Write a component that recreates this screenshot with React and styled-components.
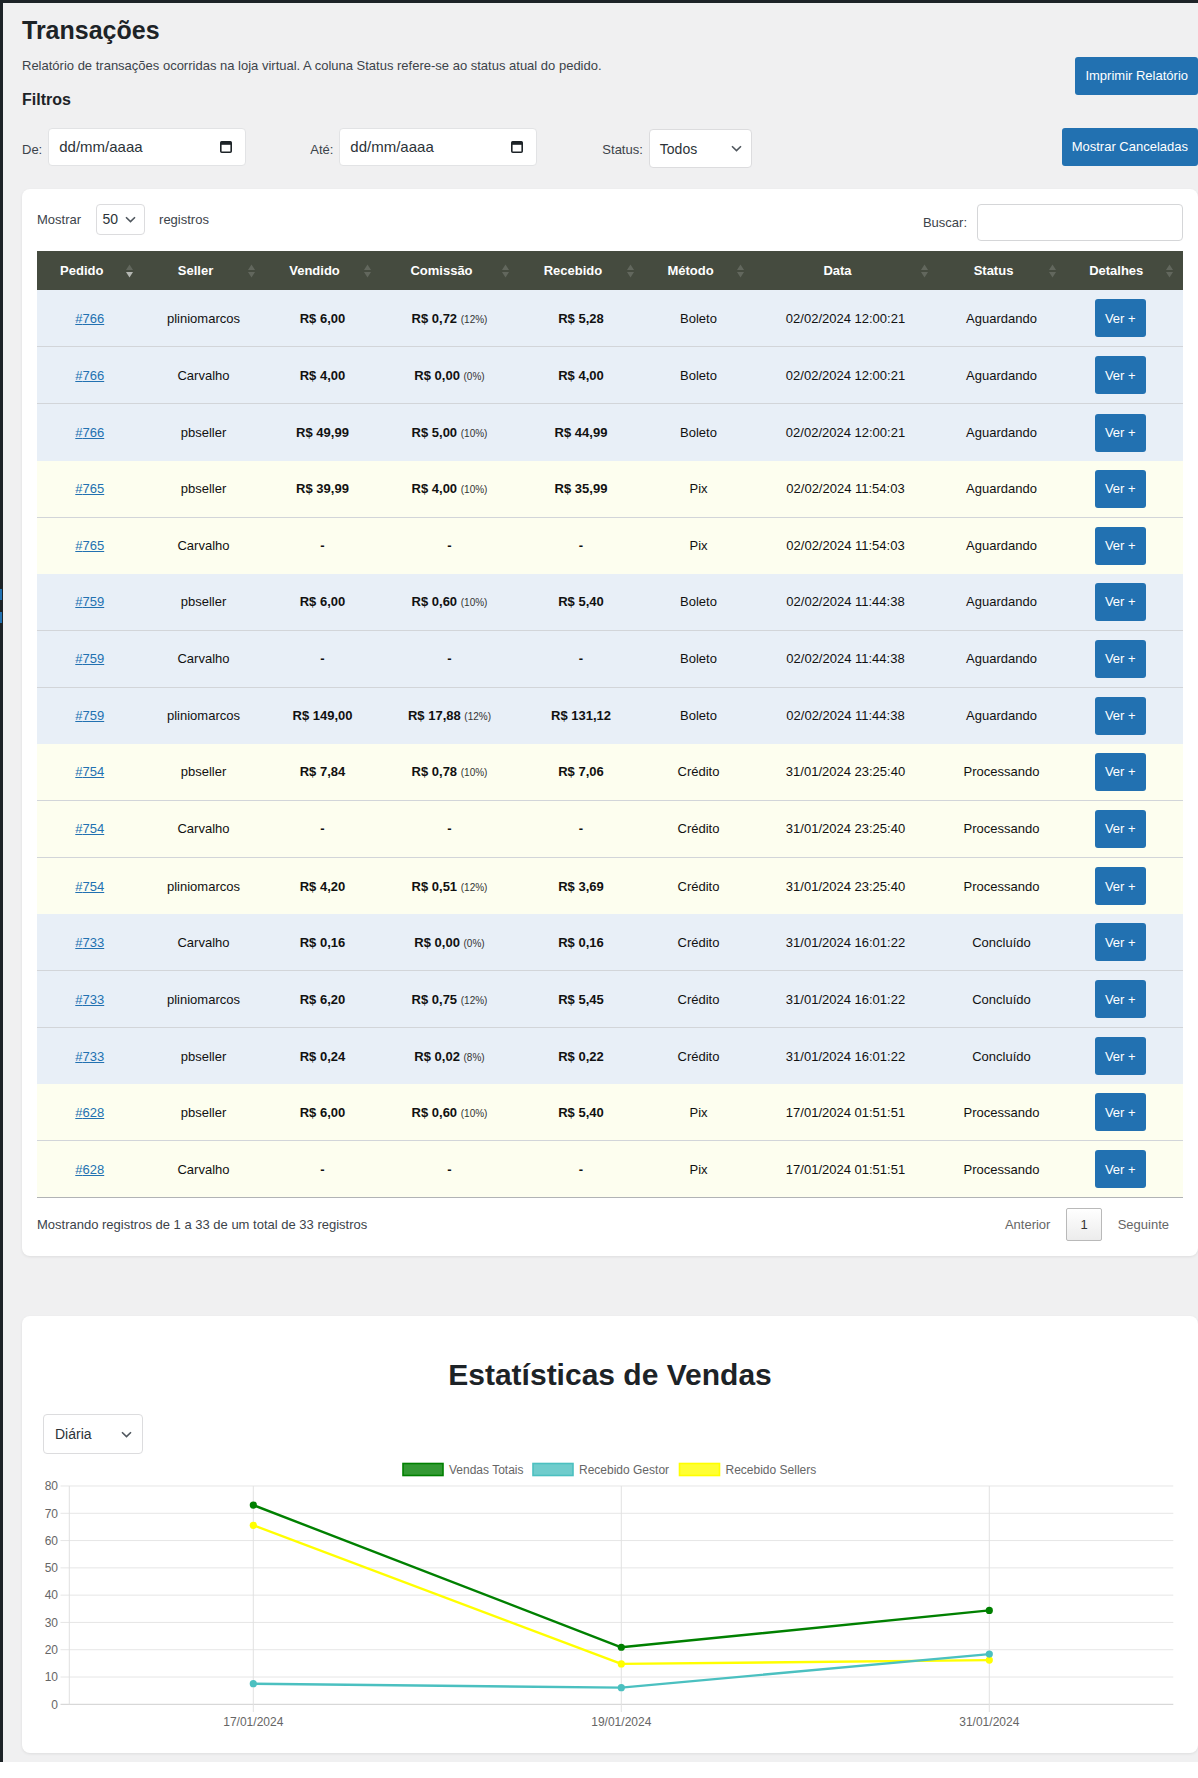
import React from 'react';
import styled, { createGlobalStyle } from 'styled-components';

const GlobalStyle = createGlobalStyle`
  html, body {
    margin: 0;
    padding: 0;
    background: #fff;
    overflow: hidden;
  }
  body {
    font-family: "Liberation Sans", Arial, sans-serif;
    font-size: 13px;
    color: #3c434a;
  }
  * { box-sizing: border-box; }
`;

const Screen = styled.div`
  display: flex;
  background: #f0f0f1;
  border-top: 3px solid #1d2327;
`;

const AdminEdge = styled.div`
  width: 3px;
  flex: none;
  background: #1d2327;
  padding-top: 586px;
  display: flex;
  flex-direction: column;
  gap: 12px;
`;

const EdgeMark = styled.span`
  display: block;
  width: 2px;
  height: 11px;
  background: #2271b1;
`;

const Main = styled.main`
  flex: 1;
  min-width: 0;
  padding: 0 0 8.7px 19px;
`;

const PageTitle = styled.h1`
  margin: 11.7px 0 0;
  font-size: 25px;
  line-height: 30px;
  font-weight: 700;
  color: #1d2327;
`;

const IntroRow = styled.div`
  display: flex;
  justify-content: space-between;
  align-items: flex-start;
  margin-top: 12.3px;
`;

const IntroText = styled.p`
  margin: 0;
  font-size: 13px;
  line-height: 18.2px;
  color: #3c434a;
`;

const SectionTitle = styled.h3`
  margin: 14.9px 0 0;
  font-size: 16px;
  line-height: 20.8px;
  font-weight: 700;
  color: #1d2327;
`;

const PrimaryButton = styled.button`
  height: 38px;
  padding: 0 10px;
  border: 0;
  border-radius: 3px;
  background: #2271b1;
  color: #fff;
  font-family: inherit;
  font-size: 13px;
  white-space: nowrap;
  margin-left: ${(p) => (p.$push ? 'auto' : '0')};
`;

const FilterRow = styled.div`
  display: flex;
  align-items: flex-start;
  margin-top: 16.8px;
`;

const FieldLabel = styled.label`
  align-self: center;
  font-size: 13px;
  color: #3c434a;
  margin: 3px 6px 0 ${(p) => p.$gap || 0}px;
`;

const DateField = styled.div`
  width: 198px;
  height: 38px;
  display: flex;
  align-items: center;
  justify-content: space-between;
  padding: 0 13px 0 10px;
  background: #fff;
  border: 1px solid #e2e3e5;
  border-radius: 4px;
  font-size: 15px;
  color: #2c3338;
`;

const SelectBox = styled.div`
  width: ${(p) => p.$w}px;
  height: ${(p) => p.$h}px;
  margin-top: ${(p) => p.$mt || 0}px;
  display: flex;
  align-items: center;
  justify-content: space-between;
  padding: 0 ${(p) => p.$pr || 9}px 0 ${(p) => p.$pl || 10}px;
  background: #fff;
  border: 1px solid #dcdcde;
  border-radius: 4px;
  font-size: 14px;
  color: #2c3338;
`;

const Card = styled.section`
  background: #fff;
  border-radius: 8px;
  box-shadow: 0 1px 3px rgba(0, 0, 0, 0.08);
  margin-top: ${(p) => p.$mt}px;
  padding: ${(p) => p.$pad};
`;

const TableTop = styled.div`
  display: flex;
  justify-content: space-between;
  align-items: flex-start;
`;

const ControlGroup = styled.div`
  display: flex;
  align-items: center;
  gap: ${(p) => p.$gap}px;
  font-size: 13px;
  color: #3c434a;
`;

const SearchInput = styled.div`
  width: 206px;
  height: 37px;
  border: 1px solid #d5d6d8;
  border-radius: 4px;
  background: #fff;
`;

const DataTable = styled.table`
  width: 100%;
  margin-top: 10.4px;
  border-collapse: collapse;
  table-layout: fixed;
  border-bottom: 1px solid #b1b3b5;
`;

const HeadCell = styled.th`
  background: #454b3f;
  color: #fff;
  font-size: 13px;
  font-weight: 700;
  padding: 10px;
  line-height: 19px;
`;

const HeadInner = styled.div`
  display: flex;
  align-items: center;
`;

const HeadLabel = styled.span`
  flex: 1;
  text-align: center;
  white-space: nowrap;
`;

const SortWrap = styled.span`
  flex: none;
  display: flex;
  margin-left: 9px;
`;

const BodyRow = styled.tr`
  background: ${(p) => (p.$tone === 'blue' ? '#e8eff7' : '#fdfeef')};
  & + & > td {
    border-top: 1px solid #d2d5d9;
  }
`;

const Cell = styled.td`
  padding: 9.04px ${(p) => (p.$action ? '14px' : '10px')} 9.04px ${(p) => (p.$action ? '6px' : '10px')};
  text-align: center;
  font-size: 13px;
  color: #111;
  white-space: nowrap;
  font-weight: ${(p) => (p.$strong ? 700 : 400)};
`;

const OrderLink = styled.a`
  color: #2271b1;
  text-decoration: underline;
`;

const Rate = styled.span`
  font-size: 10px;
  font-weight: 400;
  color: #333;
`;

const ViewButton = styled.button`
  width: 51px;
  height: 38px;
  border: 0;
  border-radius: 3px;
  background: #2271b1;
  color: #fff;
  font-family: inherit;
  font-size: 13px;
  vertical-align: middle;
`;

const TableFooter = styled.div`
  display: flex;
  justify-content: space-between;
  align-items: center;
  margin-top: 10px;
  font-size: 13px;
  color: #3c434a;
`;

const Pagination = styled.div`
  display: flex;
  align-items: center;
  gap: 2px;
`;

const PageLink = styled.span`
  padding: 6.7px 13px;
  border: 1px solid ${(p) => (p.$current ? '#b9b9b9' : 'transparent')};
  border-radius: 2px;
  background: ${(p) => (p.$current ? 'linear-gradient(to bottom, #fff 0%, #ececec 100%)' : 'transparent')};
  color: ${(p) => (p.$current ? '#333' : '#666')};
  line-height: 17px;
  font-size: 13px;
`;

const ChartTitle = styled.h2`
  margin: 21.3px 0 0;
  text-align: center;
  font-size: 30px;
  line-height: 36px;
  font-weight: 700;
  color: #1d2327;
`;

const ChartBlock = styled.div`
  margin-top: 21.3px;
`;

const ChartSvg = styled.svg`
  display: block;
  margin-top: 2.3px;
  font-family: "Liberation Sans", Arial, sans-serif;
`;

const Chevron = () => (
  <svg width="11" height="7" viewBox="0 0 11 7">
    <path d="M1 1.2 5.5 5.6 10 1.2" fill="none" stroke="#50575e" strokeWidth="1.6" />
  </svg>
);

const CalendarIcon = () => (
  <svg width="12" height="13" viewBox="0 0 12 13">
    <rect x="0.8" y="1.8" width="10.4" height="10.4" rx="1" fill="none" stroke="#1d2327" strokeWidth="1.6" />
    <rect x="0.8" y="1.6" width="10.4" height="3.2" fill="#1d2327" />
  </svg>
);

const SortIcon = ({ active }) => (
  <svg width="7" height="14" viewBox="0 0 7 14">
    <path d="M0 6 3.5 0.5 7 6Z" fill="#fff" fillOpacity="0.16" />
    <path d="M0 8 7 8 3.5 13.5Z" fill="#fff" fillOpacity={active ? 0.6 : 0.16} />
  </svg>
);

const columns = [
  { label: 'Pedido', width: 105.5, active: true },
  { label: 'Seller', width: 122 },
  { label: 'Vendido', width: 116 },
  { label: 'Comissão', width: 138 },
  { label: 'Recebido', width: 125 },
  { label: 'Método', width: 110 },
  { label: 'Data', width: 184 },
  { label: 'Status', width: 128 },
  { label: 'Detalhes', width: 117.5 },
];

const rows = [
  ['766', 'pliniomarcos', 'R$ 6,00', 'R$ 0,72', '12%', 'R$ 5,28', 'Boleto', '02/02/2024 12:00:21', 'Aguardando'],
  ['766', 'Carvalho', 'R$ 4,00', 'R$ 0,00', '0%', 'R$ 4,00', 'Boleto', '02/02/2024 12:00:21', 'Aguardando'],
  ['766', 'pbseller', 'R$ 49,99', 'R$ 5,00', '10%', 'R$ 44,99', 'Boleto', '02/02/2024 12:00:21', 'Aguardando'],
  ['765', 'pbseller', 'R$ 39,99', 'R$ 4,00', '10%', 'R$ 35,99', 'Pix', '02/02/2024 11:54:03', 'Aguardando'],
  ['765', 'Carvalho', null, null, null, null, 'Pix', '02/02/2024 11:54:03', 'Aguardando'],
  ['759', 'pbseller', 'R$ 6,00', 'R$ 0,60', '10%', 'R$ 5,40', 'Boleto', '02/02/2024 11:44:38', 'Aguardando'],
  ['759', 'Carvalho', null, null, null, null, 'Boleto', '02/02/2024 11:44:38', 'Aguardando'],
  ['759', 'pliniomarcos', 'R$ 149,00', 'R$ 17,88', '12%', 'R$ 131,12', 'Boleto', '02/02/2024 11:44:38', 'Aguardando'],
  ['754', 'pbseller', 'R$ 7,84', 'R$ 0,78', '10%', 'R$ 7,06', 'Crédito', '31/01/2024 23:25:40', 'Processando'],
  ['754', 'Carvalho', null, null, null, null, 'Crédito', '31/01/2024 23:25:40', 'Processando'],
  ['754', 'pliniomarcos', 'R$ 4,20', 'R$ 0,51', '12%', 'R$ 3,69', 'Crédito', '31/01/2024 23:25:40', 'Processando'],
  ['733', 'Carvalho', 'R$ 0,16', 'R$ 0,00', '0%', 'R$ 0,16', 'Crédito', '31/01/2024 16:01:22', 'Concluído'],
  ['733', 'pliniomarcos', 'R$ 6,20', 'R$ 0,75', '12%', 'R$ 5,45', 'Crédito', '31/01/2024 16:01:22', 'Concluído'],
  ['733', 'pbseller', 'R$ 0,24', 'R$ 0,02', '8%', 'R$ 0,22', 'Crédito', '31/01/2024 16:01:22', 'Concluído'],
  ['628', 'pbseller', 'R$ 6,00', 'R$ 0,60', '10%', 'R$ 5,40', 'Pix', '17/01/2024 01:51:51', 'Processando'],
  ['628', 'Carvalho', null, null, null, null, 'Pix', '17/01/2024 01:51:51', 'Processando'],
];

// alternate the row tone every time the order number changes
const toned = rows.reduce((acc, r, i) => {
  const prev = acc[i - 1];
  const tone = !prev ? 'blue' : prev.row[0] === r[0] ? prev.tone : prev.tone === 'blue' ? 'yellow' : 'blue';
  acc.push({ row: r, tone });
  return acc;
}, []);

// chart geometry (px inside the svg)
const CH_W = 1134;
const CH_H = 280;
const PLOT_L = 26.3;
const PLOT_R = 1130.3;
const ZERO_Y = 248.3;
const UNIT = 2.7288;
const yOf = (v) => ZERO_Y - v * UNIT;
const cats = [
  { label: '17/01/2024', x: 210.3 },
  { label: '19/01/2024', x: 578.3 },
  { label: '31/01/2024', x: 946.3 },
];
const series = [
  { name: 'Recebido Sellers', color: '#ffff00', data: [65.6, 14.8, 16.2] },
  { name: 'Recebido Gestor', color: '#4bc0c0', data: [7.55, 6.1, 18.4] },
  { name: 'Vendas Totais', color: '#008000', data: [73.0, 20.9, 34.4] },
];
const legend = [
  { name: 'Vendas Totais', x: 360, fill: '#339933', stroke: '#008000' },
  { name: 'Recebido Gestor', x: 490, fill: '#6fcccc', stroke: '#4bc0c0' },
  { name: 'Recebido Sellers', x: 636.5, fill: '#ffff33', stroke: '#ffff00' },
];

const SalesChart = () => (
  <ChartSvg width={CH_W} height={CH_H} viewBox={`0 0 ${CH_W} ${CH_H}`}>
    {legend.map((l) => (
      <g key={l.name}>
        <rect x={l.x} y={7.5} width={40} height={12} fill={l.fill} stroke={l.stroke} strokeWidth={1.6} />
        <text x={l.x + 46} y={18.2} fontSize="12" fill="#666">{l.name}</text>
      </g>
    ))}
    {[0, 10, 20, 30, 40, 50, 60, 70, 80].map((v) => (
      <g key={v}>
        <line x1={17.5} x2={PLOT_R} y1={yOf(v)} y2={yOf(v)} stroke={v === 0 ? '#cfcfcf' : '#e6e6e6'} strokeWidth="1" />
        <text x={15} y={yOf(v) + 4.3} fontSize="12" fill="#666" textAnchor="end">{v}</text>
      </g>
    ))}
    <line x1={PLOT_L} x2={PLOT_L} y1={30} y2={ZERO_Y} stroke="#e0e0e0" strokeWidth="1" />
    {cats.map((c) => (
      <g key={c.label}>
        <line x1={c.x} x2={c.x} y1={30} y2={256} stroke="#e2e2e2" strokeWidth="1" />
        <text x={c.x} y={270} fontSize="12" fill="#666" textAnchor="middle">{c.label}</text>
      </g>
    ))}
    {series.map((s) => (
      <g key={s.name}>
        <polyline
          points={s.data.map((v, i) => `${cats[i].x},${yOf(v)}`).join(' ')}
          fill="none"
          stroke={s.color}
          strokeWidth="2.4"
          strokeLinejoin="round"
        />
        {s.data.map((v, i) => (
          <circle key={i} cx={cats[i].x} cy={yOf(v)} r="3.6" fill={s.color} />
        ))}
      </g>
    ))}
  </ChartSvg>
);

const App = () => (
  <>
    <GlobalStyle />
    <Screen>
      <AdminEdge>
        <EdgeMark />
        <EdgeMark />
      </AdminEdge>
      <Main>
        <PageTitle>Transações</PageTitle>
        <IntroRow>
          <div>
            <IntroText>
              Relatório de transações ocorridas na loja virtual. A coluna Status refere-se ao status atual do pedido.
            </IntroText>
            <SectionTitle>Filtros</SectionTitle>
          </div>
          <PrimaryButton>Imprimir Relatório</PrimaryButton>
        </IntroRow>

        <FilterRow>
          <FieldLabel>De:</FieldLabel>
          <DateField>
            <span>dd/mm/aaaa</span>
            <CalendarIcon />
          </DateField>
          <FieldLabel $gap={64}>Até:</FieldLabel>
          <DateField>
            <span>dd/mm/aaaa</span>
            <CalendarIcon />
          </DateField>
          <FieldLabel $gap={65}>Status:</FieldLabel>
          <SelectBox $w={103} $h={39} $mt={1.6}>
            <span>Todos</span>
            <Chevron />
          </SelectBox>
          <PrimaryButton $push>Mostrar Canceladas</PrimaryButton>
        </FilterRow>

        <Card $mt={20.7} $pad="15px">
          <TableTop>
            <ControlGroup $gap={14.5}>
              <span>Mostrar</span>
              <SelectBox $w={49} $h={31} $pl={6} $pr={8}>
                <span>50</span>
                <Chevron />
              </SelectBox>
              <span>registros</span>
            </ControlGroup>
            <ControlGroup $gap={10}>
              <span>Buscar:</span>
              <SearchInput />
            </ControlGroup>
          </TableTop>

          <DataTable>
            <colgroup>
              {columns.map((c) => (
                <col key={c.label} style={{ width: c.width }} />
              ))}
            </colgroup>
            <thead>
              <tr>
                {columns.map((c) => (
                  <HeadCell key={c.label}>
                    <HeadInner>
                      <HeadLabel>{c.label}</HeadLabel>
                      <SortWrap>
                        <SortIcon active={c.active} />
                      </SortWrap>
                    </HeadInner>
                  </HeadCell>
                ))}
              </tr>
            </thead>
            <tbody>
              {toned.map(({ row, tone }, i) => {
                const [order, seller, sold, fee, rate, received, method, date, status] = row;
                return (
                  <BodyRow key={i} $tone={tone}>
                    <Cell><OrderLink href="#">#{order}</OrderLink></Cell>
                    <Cell>{seller}</Cell>
                    <Cell $strong>{sold || '-'}</Cell>
                    <Cell $strong>
                      {fee ? (
                        <>
                          {fee} <Rate>({rate})</Rate>
                        </>
                      ) : (
                        '-'
                      )}
                    </Cell>
                    <Cell $strong>{received || '-'}</Cell>
                    <Cell>{method}</Cell>
                    <Cell>{date}</Cell>
                    <Cell>{status}</Cell>
                    <Cell $action><ViewButton>Ver +</ViewButton></Cell>
                  </BodyRow>
                );
              })}
            </tbody>
          </DataTable>

          <TableFooter>
            <span>Mostrando registros de 1 a 33 de um total de 33 registros</span>
            <Pagination>
              <PageLink>Anterior</PageLink>
              <PageLink $current>1</PageLink>
              <PageLink>Seguinte</PageLink>
            </Pagination>
          </TableFooter>
        </Card>

        <Card $mt={60} $pad="20px 21px 17.3px">
          <ChartTitle>Estatísticas de Vendas</ChartTitle>
          <ChartBlock>
            <SelectBox $w={100} $h={39.4} $pl={11} $pr={10}>
              <span>Diária</span>
              <Chevron />
            </SelectBox>
          </ChartBlock>
          <SalesChart />
        </Card>
      </Main>
    </Screen>
  </>
);

export default App;
